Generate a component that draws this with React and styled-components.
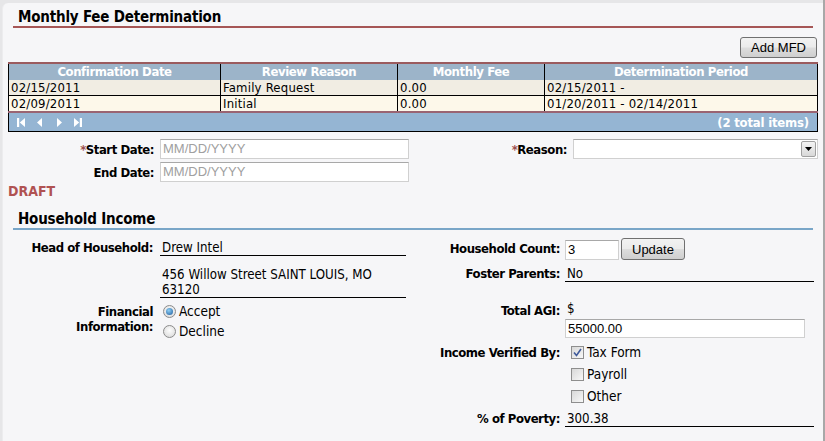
import styled, { createGlobalStyle } from "styled-components";

const GlobalStyle = createGlobalStyle`
  html, body {
    margin: 0;
    padding: 0;
    background: #e6e6e8;
    font-family: "DejaVu Sans Condensed", "DejaVu Sans", sans-serif;
    font-size: 12px;
    color: #000;
  }
`;

const Frame = styled.div`
  display: flex;
  height: 441px;
  overflow: hidden;
`;

const Panel = styled.div`
  flex: 1;
  margin: 3px 0 0 2px;
  padding: 5px 5px 0 5px;
  background: #f6f6f8;
  border-top-left-radius: 6px;
  border-left: 1px solid #ececee;
`;

const ScrollEdge = styled.div`
  width: 3px;
  background: #a8a8a8;
`;

const SectionTitle = styled.div`
  margin: 0 5px;
  padding: 0 0 0 5px;
  font-size: 15px;
  font-weight: bold;
  letter-spacing: -0.2px;
  line-height: 18px;
  border-bottom: 2px solid ${(p) => p.$line};
`;

const ButtonRow = styled.div`
  display: flex;
  justify-content: flex-end;
  margin: 9px 1px 4px 0;
`;

const Button = styled.button`
  font-family: "Liberation Sans", Arial, sans-serif;
  font-size: 13px;
  height: ${(p) => p.$h || 21}px;
  padding: 0 ${(p) => p.$px || 10}px;
  border: 1px solid #707070;
  border-radius: 3px;
  background: linear-gradient(#f2f2f2 0%, #ebebeb 48%, #dddddd 52%, #cfcfcf 100%);
  color: #000;
`;

const Grid = styled.table`
  width: 100%;
  border-collapse: collapse;
  table-layout: fixed;
  border-left: 1px solid #000;
  border-right: 1px solid #000;
`;

const Th = styled.th`
  height: 16px;
  padding: 0;
  background: #9cb4c9;
  color: #fff;
  font-size: 13px;
  font-weight: bold;
  letter-spacing: -0.4px;
  line-height: 16px;
  border-top: 2px solid #9b5b5e;
  border-left: 1px solid #000;
  &:first-child { border-left: none; }
`;

const Td = styled.td`
  height: 15px;
  padding: 0 0 0 2px;
  font-size: 13px;
  letter-spacing: 0.2px;
  line-height: 15px;
  background: ${(p) => (p.$alt ? "#fdf8ea" : "#f1ede3")};
  border-left: 1px solid #000;
  border-bottom: 1px solid ${(p) => (p.$alt ? "transparent" : "#000")};
  white-space: nowrap;
  &:first-child { border-left: none; }
`;

const Pager = styled.td`
  height: 18px;
  padding: 0 8px 0 8px;
  background: #95b5d3;
  border-top: 2px solid #9a6472;
  border-bottom: 1px solid #000;
`;

const PagerInner = styled.div`
  display: flex;
  align-items: center;
  justify-content: space-between;
  color: #fff;
  font-weight: bold;
  font-size: 13px;
  letter-spacing: -0.2px;
`;

const PagerIcons = styled.div`
  display: flex;
  gap: 10px;
  align-items: center;
`;

const FormGrid = styled.div`
  display: grid;
  grid-template-columns: 146px 249px 152px 245px;
  column-gap: 6px;
  row-gap: 3px;
  margin-top: 7px;
  align-items: center;
`;

const Label = styled.div`
  text-align: right;
  font-weight: bold;
  font-size: 13px;
  letter-spacing: -0.45px;
  line-height: 15px;
`;

const Req = styled.span`
  color: #9c4e4e;
`;

const TextInput = styled.div`
  box-sizing: border-box;
  height: ${(p) => p.$h || 20}px;
  width: ${(p) => (p.$w ? `${p.$w}px` : "auto")};
  margin-top: ${(p) => p.$mt || 0}px;
  border: 1px solid #d0d0d0;
  border-top-color: #a8a8a8;
  background: #fff;
  font-family: "Liberation Sans", Arial, sans-serif;
  font-size: 13px;
  line-height: ${(p) => (p.$h || 20) - 2}px;
  padding-left: 2px;
  color: ${(p) => (p.$ph ? "#a0a0a0" : "#000")};
`;

const Select = styled(TextInput)`
  display: flex;
  justify-content: flex-end;
  align-items: center;
  padding-right: 1px;
`;

const DropBtn = styled.div`
  width: 15px;
  height: 16px;
  box-sizing: border-box;
  border: 1px solid #a0a0a0;
  border-radius: 2px;
  background: linear-gradient(#f4f4f4, #d8d8d8);
  display: flex;
  align-items: center;
  justify-content: center;
`;

const Draft = styled.div`
  color: #b05252;
  font-weight: bold;
  font-size: 14px;
  line-height: 17px;
  margin: 1px 0 10px 0;
`;

const Columns = styled.div`
  display: grid;
  grid-template-columns: 398px 1fr;
  align-items: start;
  margin-top: 8px;
  padding-right: 2px;
`;

const FieldGrid = styled.div`
  display: grid;
  grid-template-columns: ${(p) => p.$cols};
  column-gap: ${(p) => p.$gap}px;
  align-items: start;
  align-content: start;
`;

const FieldLabel = styled(Label)`
  padding-top: ${(p) => p.$pt || 0}px;
`;

const Value = styled.div`
  font-size: 13.2px;
  line-height: 15px;
  padding: ${(p) => p.$pt || 0}px 0 0 2px;
  border-bottom: ${(p) => (p.$under ? "1px solid #000" : "none")};
  margin-bottom: ${(p) => p.$mb || 0}px;
`;

const Inline = styled.div`
  display: flex;
  align-items: center;
  gap: ${(p) => p.$gap || 0}px;
  margin-bottom: ${(p) => p.$mb || 0}px;
`;

const OptionList = styled.div`
  display: flex;
  flex-direction: column;
  gap: ${(p) => p.$gap}px;
  padding: ${(p) => p.$pt || 0}px 0 0 ${(p) => p.$pl}px;
  margin-bottom: ${(p) => p.$mb || 0}px;
`;

const Option = styled.div`
  display: flex;
  align-items: center;
  gap: 3px;
  font-size: 13.5px;
  line-height: 16px;
`;

const Radio = styled.span`
  box-sizing: border-box;
  width: 13px;
  height: 13px;
  border-radius: 50%;
  border: 1px solid #8b8b8b;
  background: radial-gradient(circle at 50% 40%, #fdfdfd, #d6d6d6);
  display: inline-flex;
  align-items: center;
  justify-content: center;
  &::after {
    content: "";
    width: 7px;
    height: 7px;
    border-radius: 50%;
    background: ${(p) => (p.$on ? "radial-gradient(circle at 40% 35%, #8fd0f5, #1d5a9c)" : "transparent")};
  }
`;

const Check = styled.span`
  box-sizing: border-box;
  width: 13px;
  height: 13px;
  border: 1px solid #8e8e8e;
  background: linear-gradient(135deg, #d8d8d8, #f8f8f8);
  display: inline-flex;
  align-items: center;
  justify-content: center;
`;

const PagerIcon = ({ d }) => (
  <svg width="9" height="11" viewBox="0 0 9 11">
    <path d={d} fill="#fff" />
  </svg>
);

const rows = [
  ["02/15/2011", "Family Request", "0.00", "02/15/2011 -"],
  ["02/09/2011", "Initial", "0.00", "01/20/2011 - 02/14/2011"],
];

export default function App() {
  return (
    <>
      <GlobalStyle />
      <Frame>
        <Panel>
          <SectionTitle $line="#a65656">Monthly Fee Determination</SectionTitle>
          <ButtonRow>
            <Button>Add MFD</Button>
          </ButtonRow>
          <Grid>
            <colgroup>
              <col style={{ width: 212 }} />
              <col style={{ width: 177 }} />
              <col style={{ width: 147 }} />
              <col />
            </colgroup>
            <thead>
              <tr>
                <Th>Confirmation Date</Th>
                <Th>Review Reason</Th>
                <Th>Monthly Fee</Th>
                <Th>Determination Period</Th>
              </tr>
            </thead>
            <tbody>
              {rows.map((r, i) => (
                <tr key={i}>
                  {r.map((c, j) => (
                    <Td key={j} $alt={i === 1}>{c}</Td>
                  ))}
                </tr>
              ))}
              <tr>
                <Pager colSpan={4}>
                  <PagerInner>
                    <PagerIcons>
                      <PagerIcon d="M0 1h2.2v9H0zM8 1v9L2.8 5.5z" />
                      <PagerIcon d="M6 1v9L1 5.5z" />
                      <PagerIcon d="M2 1v9l5-4.5z" />
                      <PagerIcon d="M0 1v9l5.2-4.5zM5.8 1H8v9H5.8z" />
                    </PagerIcons>
                    <span>(2 total items)</span>
                  </PagerInner>
                </Pager>
              </tr>
            </tbody>
          </Grid>

          <FormGrid>
            <Label><Req>*</Req>Start Date:</Label>
            <TextInput $ph>MM/DD/YYYY</TextInput>
            <Label><Req>*</Req>Reason:</Label>
            <Select>
              <DropBtn>
                <svg width="7" height="4" viewBox="0 0 7 4">
                  <path d="M0 0h7L3.5 4z" fill="#000" />
                </svg>
              </DropBtn>
            </Select>
            <Label>End Date:</Label>
            <TextInput $ph>MM/DD/YYYY</TextInput>
          </FormGrid>

          <Draft>DRAFT</Draft>

          <SectionTitle $line="#79a6c8">Household Income</SectionTitle>

          <Columns>
            <FieldGrid $cols="145px 246px" $gap={7}>
              <FieldLabel $pt={2}>Head of Household:</FieldLabel>
              <Value $pt={2} $under $mb={11}>Drew Intel</Value>
              <div />
              <Value $under $mb={5}>
                456 Willow Street SAINT LOUIS, MO<br />63120
              </Value>
              <FieldLabel $pt={1}>Financial<br />Information:</FieldLabel>
              <OptionList $gap={4} $pl={3}>
                <Option><Radio $on />Accept</Option>
                <Option><Radio />Decline</Option>
              </OptionList>
            </FieldGrid>

            <FieldGrid $cols="154px 249px" $gap={5}>
              <FieldLabel $pt={3}>Household Count:</FieldLabel>
              <Inline $gap={2} $mb={4}>
                <TextInput $w={54} $mt={1}>3</TextInput>
                <Button $h={22} $px={10}>Update</Button>
              </Inline>
              <FieldLabel $pt={2}>Foster Parents:</FieldLabel>
              <Value $pt={2} $under $mb={17}>No</Value>
              <FieldLabel $pt={4}>Total AGI:</FieldLabel>
              <div>
                <Value $pt={2}>$</Value>
                <TextInput $w={240} $h={19} $mt={3}>55000.00</TextInput>
              </div>
              <FieldLabel $pt={7}>Income Verified By:</FieldLabel>
              <OptionList $gap={6} $pl={6} $mb={7} $pt={6}>
                <Option>
                  <Check>
                    <svg width="9" height="9" viewBox="0 0 9 9">
                      <path d="M1 4.5l2.5 3L8 1" stroke="#3f5a9a" strokeWidth="1.6" fill="none" />
                    </svg>
                  </Check>
                  Tax Form
                </Option>
                <Option><Check />Payroll</Option>
                <Option><Check />Other</Option>
              </OptionList>
              <FieldLabel>% of Poverty:</FieldLabel>
              <Value $under>300.38</Value>
            </FieldGrid>
          </Columns>
        </Panel>
        <ScrollEdge />
      </Frame>
    </>
  );
}
